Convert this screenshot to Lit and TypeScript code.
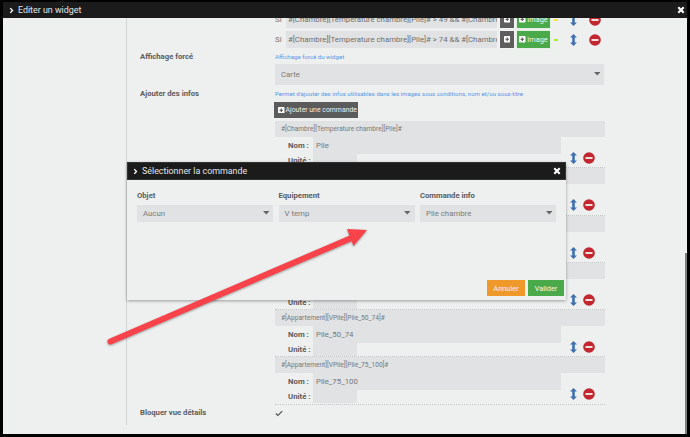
import { LitElement, html, css, svg } from "lit";
import { customElement } from "lit/decorators.js";

const chevron = html`<svg class="chev" viewBox="0 0 8 10"><path d="M2 1.2 5.6 5 2 8.8" fill="none" stroke="#fff" stroke-width="2.200"/></svg>`;
const closeX = html`<svg class="x" viewBox="0 0 10 10"><path d="M1.6 1.6 8.4 8.4M8.4 1.6 1.6 8.4" fill="none" stroke="#fff" stroke-width="2.600"/></svg>`;
const updown = html`<svg class="ud" viewBox="0 0 8 14"><path fill="#3f6fae" d="M4 0 8 4H5.500V10H8L4 14 0 10H2.500V4H0Z"/></svg>`;
const minus = html`<svg class="mi" viewBox="0 0 12 12"><circle cx="6" cy="6" r="5.800" fill="#c0272f"/><rect x="2.500" y="5" width="7" height="2" fill="#f3dede"/></svg>`;
const plus = html`<svg class="pl" viewBox="0 0 8 8"><rect width="8" height="8" rx="1" fill="#fff"/><path d="M4 1.800V6.200M1.800 4H6.200" stroke="#555" stroke-width="1.400"/></svg>`;
const caret = html`<svg class="car" viewBox="0 0 8 5"><path d="M0 0H8L4 4.500Z" fill="#666"/></svg>`;
const check = html`<svg class="chk" viewBox="0 0 10 8"><path d="M1 4 3.700 6.500 9 1" fill="none" stroke="#555" stroke-width="1.500"/></svg>`;

const cmds = [
  { h: "#[Chambre][Temperature chambre][Pile]#", n: "Pile", u: "Unité :" },
  { h: "", n: "", u: "" },
  { h: "", n: "", u: "" },
  { h: "", n: "", u: "Unité :" },
  { h: "#[Appartement][VPile][Pile_50_74]#", n: "Pile_50_74", u: "Unité :" },
  { h: "#[Appartement][VPile][Pile_75_100]#", n: "Pile_75_100", u: "Unité :" },
];

@customElement("app-root")
export class AppRoot extends LitElement {
  static styles = css`
    :host { display: block; width: 690px; height: 437px; overflow: hidden; font-family: Roboto, "Liberation Sans", sans-serif; }
    .frame { position: relative; width: 690px; height: 437px; box-sizing: border-box; background: #000; padding: 2px 3px 3px 3px; }
    .panel { height: 432px; background: #eeefef; display: flex; flex-direction: column; overflow: hidden; position: relative; }
    .title { flex: 0 0 16px; background: #1b1b1b; color: #e4e4e4; display: flex; align-items: center; font-size: 8.900px; padding: 0 2px 0 6px; z-index: 1; }
    .chev { width: 5px; height: 7px; margin-right: 4px; flex: none; }
    .x { width: 8px; height: 8px; margin-left: auto; flex: none; }
    .work { flex: 1; display: flex; min-height: 0; }
    .side { width: 124px; flex: none; height: 407px; border-right: 1px solid #d3d4d4; box-sizing: border-box; }
    .main { flex: 1; margin-top: -8px; padding-left: 13px; display: flex; flex-direction: column; min-width: 0; position: relative; }
    .row { display: flex; }
    .lab { width: 135px; flex: none; font-size: 7.700px; font-weight: 700; color: #5c5c5c; line-height: 10px; }
    .col { display: flex; flex-direction: column; width: 400px; }
    .si { height: 19px; margin-bottom: 1px; display: flex; align-items: center; margin-left: 135px; font-size: 8px; color: #777; }
    .si .s { width: 11px; flex: none; }
    .si .inp { width: 211px; height: 17px; background: #e1e2e3; flex: none; display: flex; align-items: center; padding-left: 2px; box-sizing: border-box; white-space: nowrap; overflow: hidden; color: #6f6f6f; font-size: 7.800px; }
    .b1 { width: 16px; height: 19px; margin-left: 2px; background: #5e5e5e; border: 1px solid #f4f4f4; box-sizing: border-box; display: flex; align-items: center; justify-content: center; flex: none; }
    .b2 { width: 35px; height: 19px; margin-left: 1px; background: #4aa949; border: 1px solid #e4f0e4; box-sizing: border-box; display: flex; align-items: center; justify-content: center; color: #eef6ee; font-size: 7.300px; flex: none; }
    .pl { width: 6.500px; height: 6.500px; margin-right: 1.500px; flex: none; }
    .b1 .pl { margin-right: 0; }
    .dash { width: 4px; height: 2px; margin-left: 3px; flex: none; }
    .ud { width: 7px; height: 12px; flex: none; }
    .mi { width: 12px; height: 12px; flex: none; }
    .si .ud { margin-left: 12px; }
    .si .mi { margin-left: 12px; }
    .hint { font-size: 6.100px; color: #5b97e8; line-height: 10px; white-space: nowrap; }
    .select { background: #e1e2e3; display: flex; align-items: center; justify-content: space-between; box-sizing: border-box; color: #7a7a7a; font-size: 7.800px; }
    .car { width: 6.500px; height: 4px; flex: none; margin-top: -2px; }
    .big { width: 329px; height: 21px; margin-top: 2px; padding: 0 4px 0 6px; }
    .aff { margin-top: 2px; }
    .sec2 { margin-top: 4px; }
    .add { margin: 3px 0 3px -1px; width: 84px; height: 16px; background: #5b5b5b; color: #f0f0f0; font-size: 6.900px; display: flex; align-items: center; padding-left: 4px; box-sizing: border-box; white-space: nowrap; }
    .add .pl { margin-right: 1px; }
    .cmd { width: 330px; height: 47.250px; box-sizing: border-box; border-bottom: 1px dotted #c4c5c5; display: flex; flex-direction: column; }
    .cmd .head { height: 16px; flex: none; background: #e1e2e3; color: #787878; font-size: 6.600px; display: flex; align-items: center; padding-left: 6px; white-space: nowrap; }
    .cmd .l { width: 38px; flex: none; padding-left: 13px; box-sizing: border-box; font-size: 7.800px; font-weight: 700; color: #5c5c5c; white-space: nowrap; }
    .cmd .nom { height: 17px; display: flex; align-items: center; flex: none; }
    .cmd .nom .in { width: 248px; height: 17px; background: #e1e2e3; color: #777; font-size: 7.800px; display: flex; align-items: center; padding-left: 3px; box-sizing: border-box; }
    .cmd .un { height: 13px; display: flex; align-items: center; flex: none; }
    .cmd .un .in { width: 44px; height: 13px; background: #e1e2e3; flex: none; }
    .icons { margin-left: auto; margin-right: 10px; margin-top: -5px; display: flex; align-items: center; gap: 6px; }
    .lock { margin-top: 3px; }
    .chk { width: 8px; height: 7px; margin-top: 2px; }
    .modal { position: absolute; left: 127px; top: 162px; width: 439px; height: 138px; background: #eeefef; box-shadow: 0 1px 3px rgba(0,0,0,.35); z-index: 2; display: flex; flex-direction: column; }
    .mhead { height: 18px; flex: none; box-sizing: border-box; background: #1b1b1b; color: #e4e4e4; font-size: 8.900px; display: flex; align-items: center; padding: 0 4px 0 5px; border: 1px solid #333; }
    .mbody { flex: 1; padding: 11px 10px 4px; display: flex; flex-direction: column; }
    .cols { display: grid; grid-template-columns: 136px 136px 136px; column-gap: 5.500px; }
    .cols .lb { font-size: 7.700px; font-weight: 700; color: #5c5c5c; line-height: 10px; margin-bottom: 4px; }
    .cols .select { height: 17px; padding: 0 4px 0 6px; }
    .foot { margin-top: auto; margin-right: -8px; display: flex; justify-content: flex-end; gap: 3px; }
    .btn { height: 16px; display: flex; align-items: center; justify-content: center; color: #f4f4f4; font-size: 7.400px; box-sizing: border-box; }
    .cancel { width: 38px; background: #f0992b; }
    .ok { width: 36px; background: #4aa949; }
    .scroll { position: absolute; right: 3px; top: 253px; width: 2.500px; height: 181px; background: #7d7e80; }
    .arrow { position: absolute; left: 0; top: 0; width: 690px; height: 437px; z-index: 3; pointer-events: none; filter: drop-shadow(0 1px 1px rgba(0,0,0,.35)); }
  `;

  private siRow(cond: string, color: string) {
    return html`<div class="si">
      <span class="s">Si</span>
      <div class="inp">${cond}</div>
      <div class="b1">${plus}</div>
      <div class="b2">${plus}Image</div>
      <div class="dash" style="background:${color}"></div>
      ${updown}${minus}
    </div>`;
  }

  render() {
    return html`<div class="frame">
      <div class="panel">
        <div class="title">${chevron}<span>Editer un widget</span>${closeX}</div>
        <div class="work">
          <div class="side"></div>
          <div class="main">
            ${this.siRow("#[Chambre][Temperature chambre][Pile]# > 49 && #[Chambre", "#f2e93a")}
            ${this.siRow("#[Chambre][Temperature chambre][Pile]# > 74 && #[Chambre", "#a8ee2a")}
            <div class="row aff">
              <div class="lab">Affichage forcé</div>
              <div class="col">
                <div class="hint">Affichage forcé du widget</div>
                <div class="select big"><span>Carte</span>${caret}</div>
              </div>
            </div>
            <div class="row sec2">
              <div class="lab">Ajouter des infos</div>
              <div class="col">
                <div class="hint">Permet d'ajouter des infos utilisables dans les images sous conditions, nom et/ou sous-titre</div>
                <div class="add">${plus}Ajouter une commande</div>
                ${cmds.map((c) => html`<div class="cmd">
                  <div class="head">${c.h}</div>
                  <div class="nom"><div class="l">${c.n ? "Nom :" : ""}</div><div class="in">${c.n}</div></div>
                  <div class="un"><div class="l">${c.u}</div><div class="in"></div><div class="icons">${updown}${minus}</div></div>
                </div>`)}
              </div>
            </div>
            <div class="row lock">
              <div class="lab">Bloquer vue détails</div>
              ${check}
            </div>
          </div>
        </div>
      </div>
      <div class="scroll"></div>
      <div class="modal">
        <div class="mhead">${chevron}<span>Sélectionner la commande</span>${closeX}</div>
        <div class="mbody">
          <div class="cols">
            <div><div class="lb">Objet</div><div class="select"><span>Aucun</span>${caret}</div></div>
            <div><div class="lb">Equipement</div><div class="select"><span>V temp</span>${caret}</div></div>
            <div><div class="lb">Commande info</div><div class="select"><span>Pile chambre</span>${caret}</div></div>
          </div>
          <div class="foot">
            <div class="btn cancel">Annuler</div>
            <div class="btn ok">Valider</div>
          </div>
        </div>
      </div>
      <svg class="arrow" viewBox="0 0 690 437">
        ${svg`<path d="M110.500 341.500 356 236" stroke="#f8434a" stroke-width="6" stroke-linecap="round" fill="none"/>
        <path d="M367 230 347 229 353.500 246Z" fill="#f8434a"/>`}
      </svg>
    </div>`;
  }
}
